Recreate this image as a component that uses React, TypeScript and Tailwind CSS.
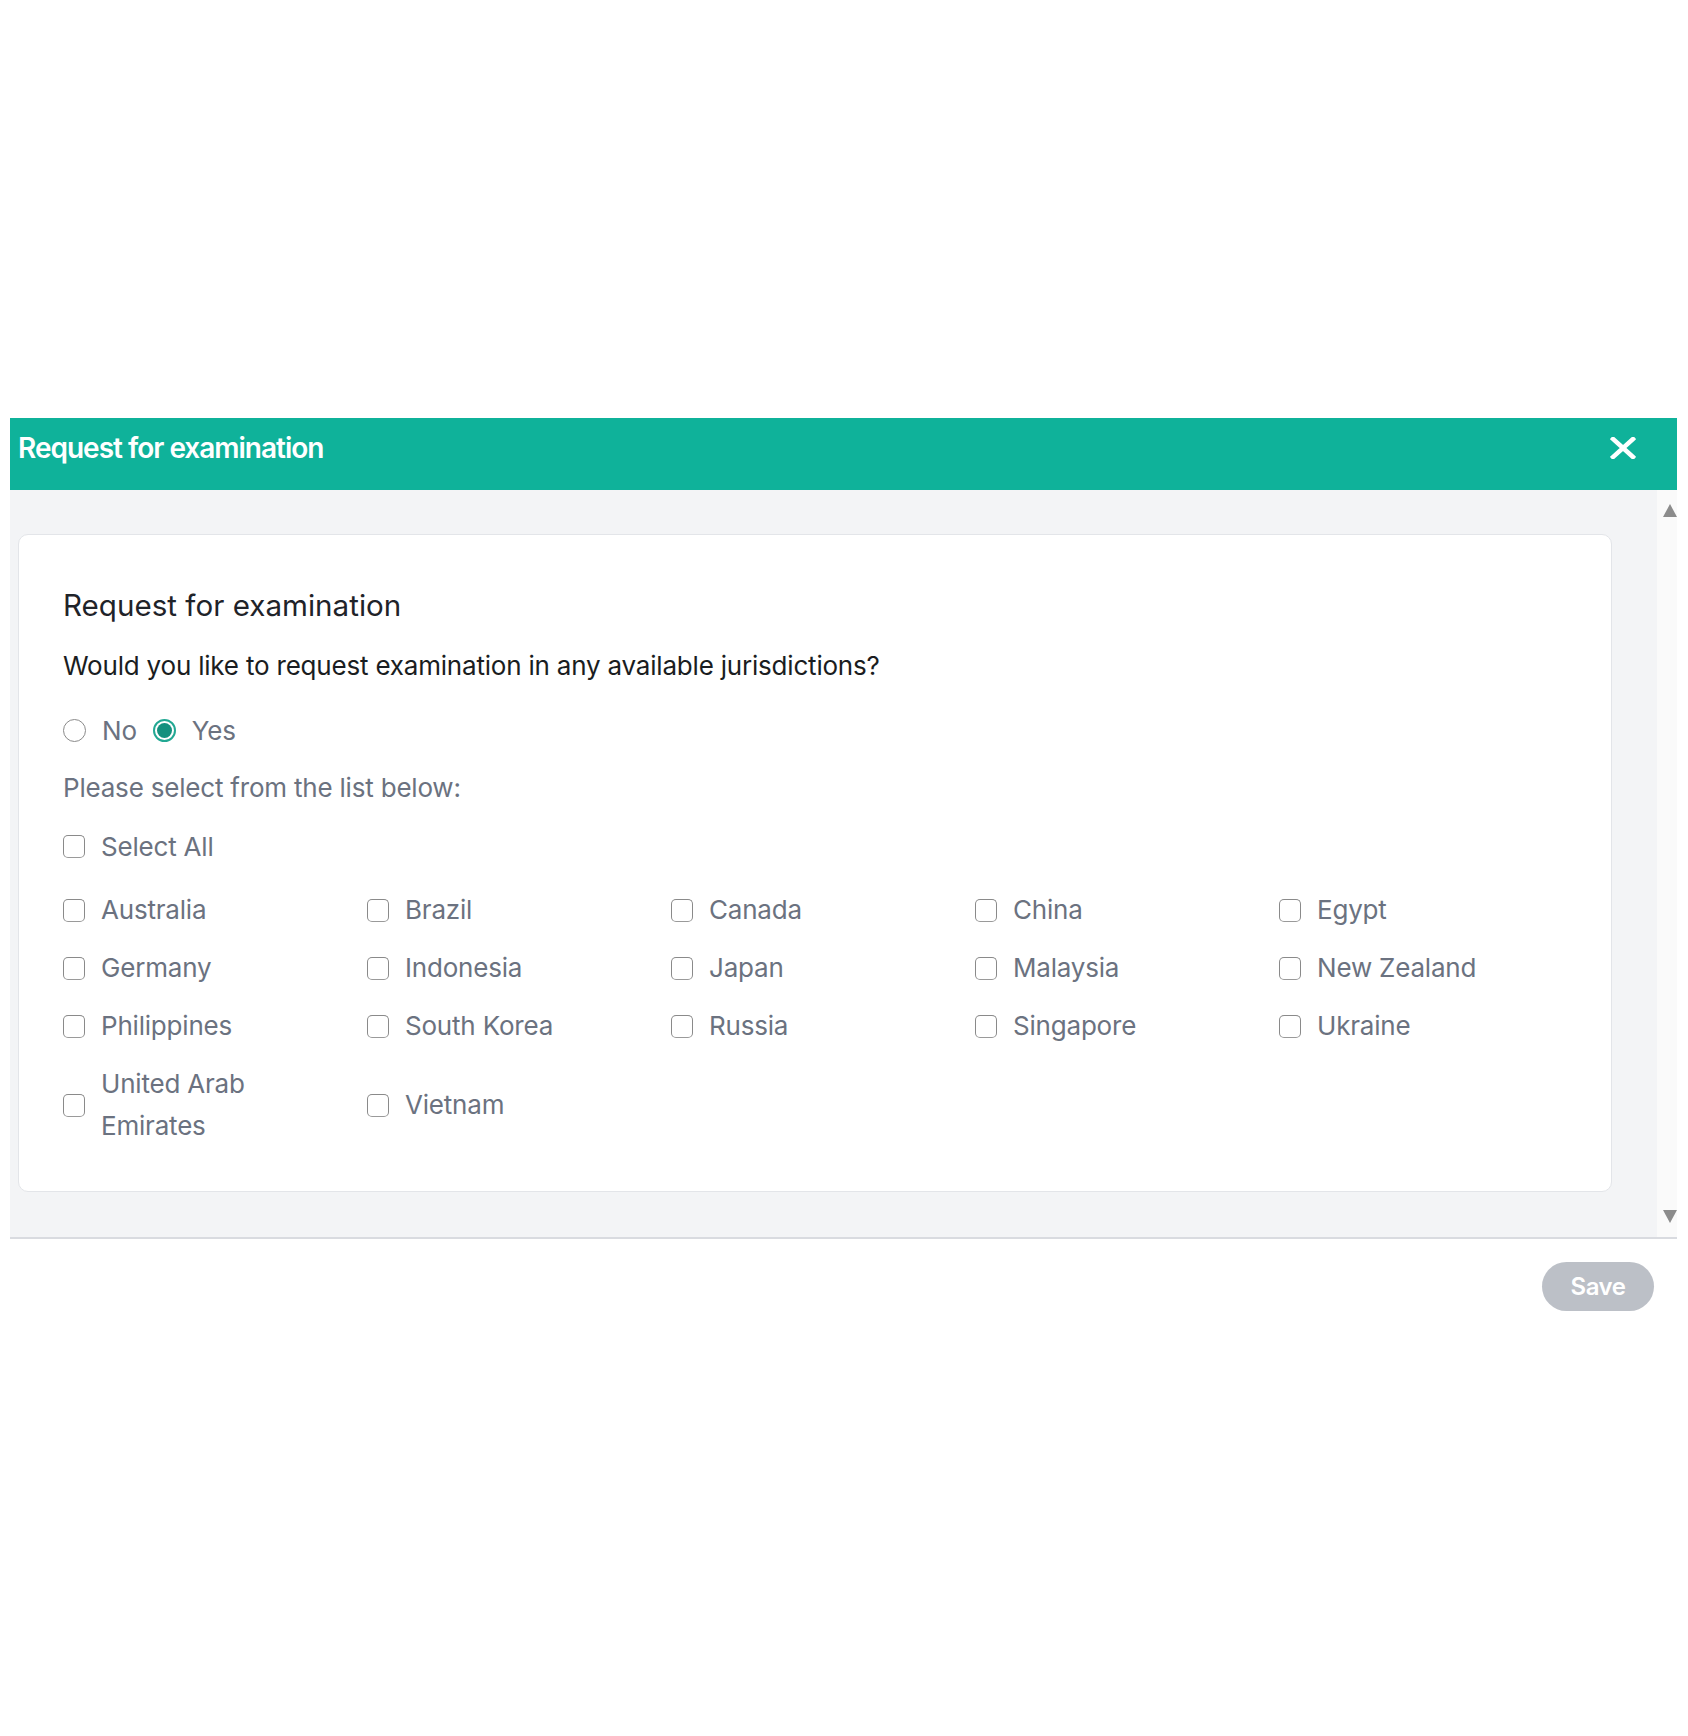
import React from 'react';

const countries = [
  'Australia', 'Brazil', 'Canada', 'China', 'Egypt',
  'Germany', 'Indonesia', 'Japan', 'Malaysia', 'New Zealand',
  'Philippines', 'South Korea', 'Russia', 'Singapore', 'Ukraine',
  'United Arab Emirates', 'Vietnam',
];

const Checkbox: React.FC = () => (
  <span className="shrink-0 w-[22px] h-[23px] rounded-[5px] border-[1.5px] border-[#8a8a8a] border-b-[#9a9a9a] bg-white" />
);

const Radio: React.FC<{ checked?: boolean }> = ({ checked }) =>
  checked ? (
    <span className="shrink-0 w-[23px] h-[23px] rounded-full border-[2px] border-[#22a893] flex items-center justify-center bg-white">
      <span className="w-[15px] h-[15px] rounded-full bg-[#14907e]" />
    </span>
  ) : (
    <span className="shrink-0 w-[23px] h-[23px] rounded-full border-[1.5px] border-[#8a8a8a] bg-white" />
  );

const Option: React.FC<{ label: string }> = ({ label }) => (
  <label className="flex items-center gap-4">
    <Checkbox />
    <span className="max-w-[200px] text-[26px] leading-[42px] tracking-[-0.2px] text-[#6b7280]">{label}</span>
  </label>
);

export default function App() {
  return (
    <div className="w-[1688px] h-[1736px] bg-white font-['Inter',sans-serif]">
      <div className="pt-[418px] pl-[10px] w-[1677px]">
        <div className="h-[72px] bg-[#0fb29a] flex items-center justify-between pl-[8px] pr-[41px] pb-[12px]">
          <h1 className="text-[28px] leading-[36px] font-semibold tracking-[-1px] text-white">Request for examination</h1>
          <svg width="26" height="22" viewBox="0 0 26 22" className="text-white">
            <path d="M3 2 L23 20 M23 2 L3 20" stroke="currentColor" strokeWidth="4.5" strokeLinecap="square" />
          </svg>
        </div>

        <div className="flex bg-[#f3f4f6] border-b-2 border-[#d9dbe0]">
          <div className="flex-1 pt-[44px] pb-[45px] pl-[8px]">
            <div className="w-[1594px] bg-white border border-[#e3e5e9] rounded-[10px] pl-[44px] pt-[52px] pb-[44px]">
              <h2 className="text-[29.6px] leading-[36px] text-[#1f2329]">Request for examination</h2>
              <p className="mt-[25px] text-[26px] leading-[36px] tracking-[-0.2px] text-[#1a1d21]">
                Would you like to request examination in any available jurisdictions?
              </p>
              <div className="mt-[28px] h-[36px] flex items-center gap-4 text-[26px] tracking-[-0.2px] text-[#6b7280]">
                <Radio />
                <span>No</span>
                <Radio checked />
                <span>Yes</span>
              </div>
              <p className="mt-[22px] text-[26px] leading-[36px] tracking-[-0.2px] text-[#6b7280]">
                Please select from the list below:
              </p>
              <div className="mt-[22px] h-[36px] flex items-center gap-4 text-[26px] tracking-[-0.2px] text-[#6b7280]">
                <Checkbox />
                <span>Select All</span>
              </div>
              <div className="mt-[25px] grid grid-cols-[repeat(5,304px)] gap-y-4">
                {countries.map((c) => (
                  <Option key={c} label={c} />
                ))}
              </div>
            </div>
          </div>
          <div className="w-[20px] bg-[#fafafa] flex flex-col justify-between items-end pt-[14px] pb-[14px]">
            <svg width="14" height="13" viewBox="0 0 14 13">
              <path d="M7 0 L14 13 L0 13 Z" fill="#8c8c8c" />
            </svg>
            <svg width="14" height="13" viewBox="0 0 14 13">
              <path d="M0 0 L14 0 L7 13 Z" fill="#8c8c8c" />
            </svg>
          </div>
        </div>

        <div className="flex justify-end pt-[23px] pr-[23px]">
          <button className="w-[112px] h-[49px] rounded-full bg-[#bcc0c7] text-white text-[24px] font-semibold tracking-[-0.5px]">
            Save
          </button>
        </div>
      </div>
    </div>
  );
}
